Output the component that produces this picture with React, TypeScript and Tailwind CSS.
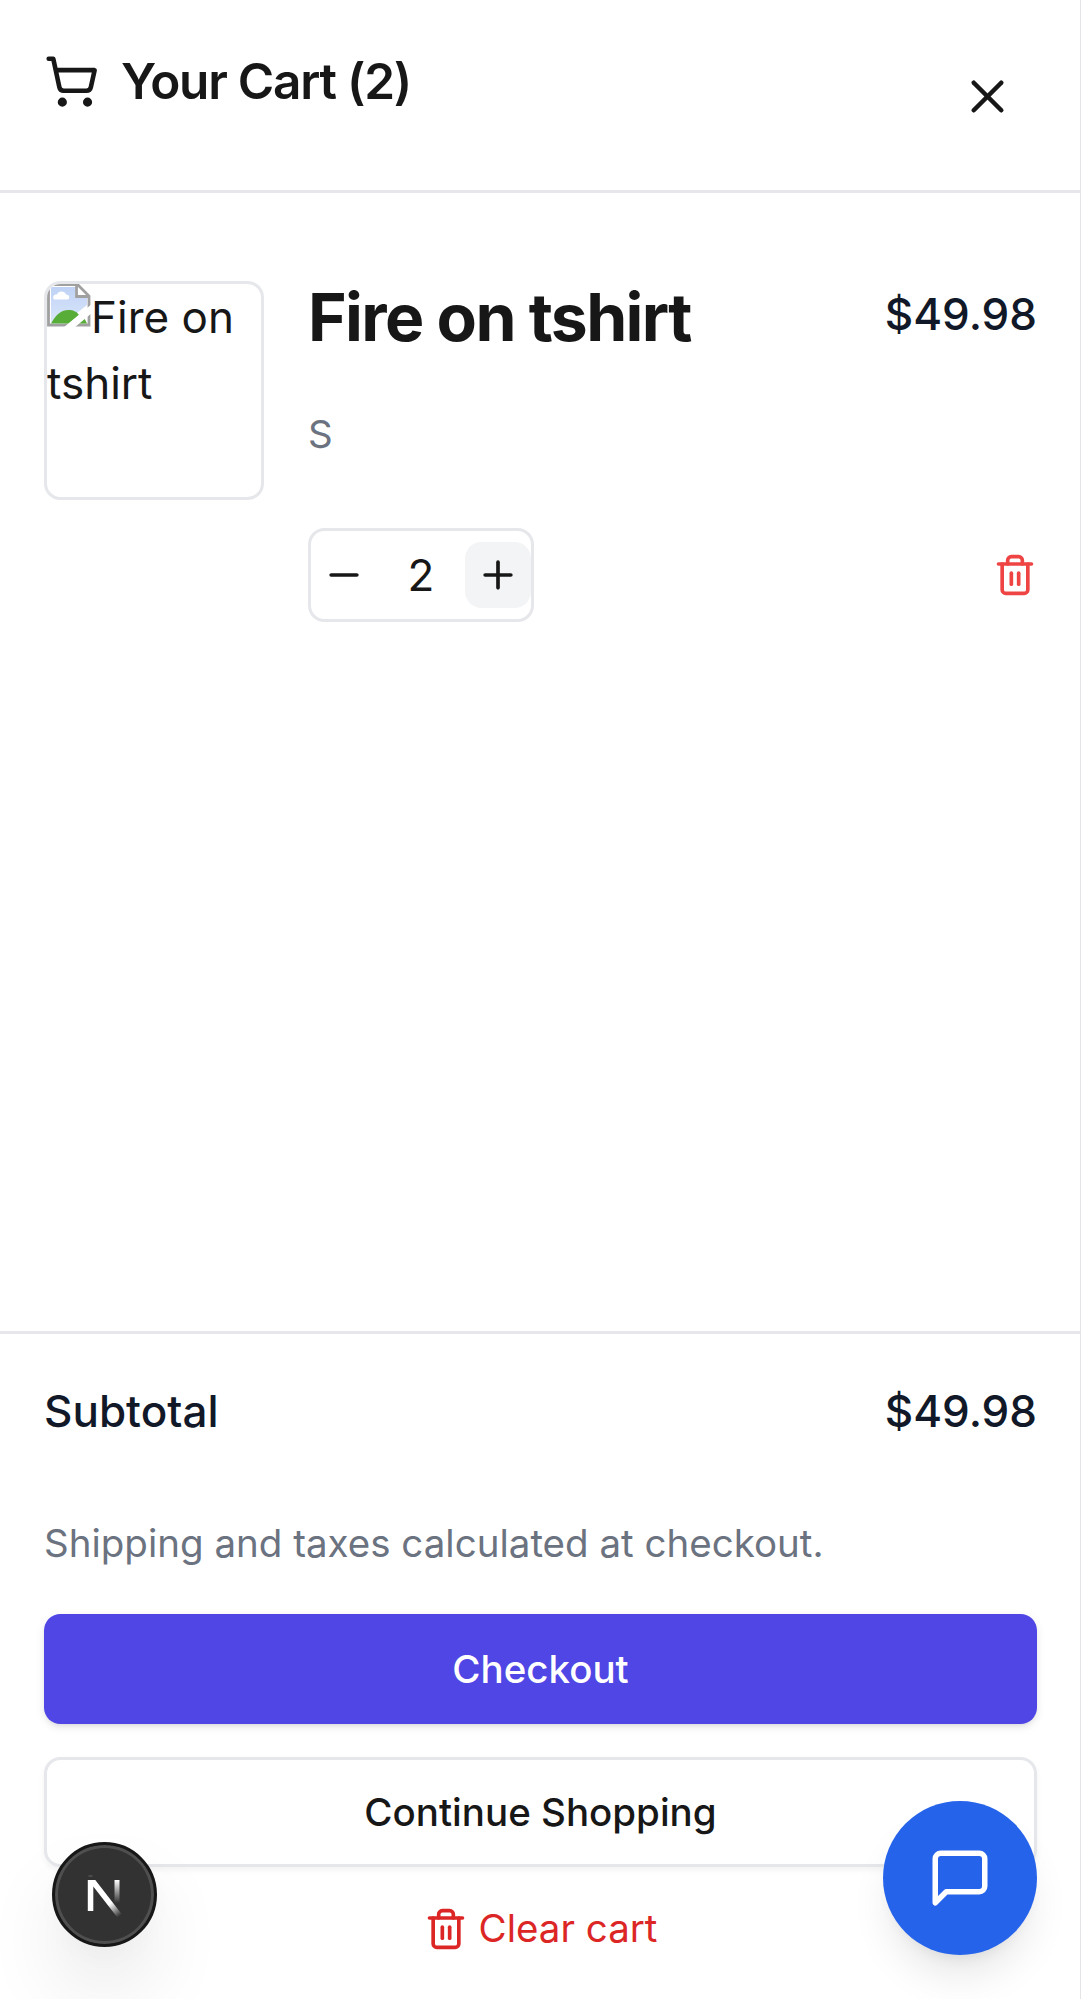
import { Minus, Plus, ShoppingCart, Trash2, X } from "lucide-react";

function BrokenImageIcon() {
  return (
    <svg className="-mt-[8px] inline-block h-[44px] w-[44px] align-[6px]" viewBox="0 0 44 44" fill="none">
      <defs>
        <linearGradient id="sky" x1="0" y1="0" x2="0" y2="1">
          <stop offset="0" stopColor="#bfd2f5" />
          <stop offset="1" stopColor="#dbe7fb" />
        </linearGradient>
      </defs>
      <path d="M1.5 1.5H30.5L42 13V42H1.5Z" fill="#fff" stroke="#a0a0a0" strokeWidth="2.8" />
      <path d="M4 4H28V14.5H40V22L17 40.5H4Z" fill="url(#sky)" />
      <path d="M7 16.5c-2-3 0-5 3-5 1-4 8-4 9 0 4 0 4 4 2 5Z" fill="#fff" />
      <path d="M4 40.5C9 31 15 27 21 27s9 2 11 5L22 40.5Z" fill="#58ad38" />
      <path d="M29 40.5l8-6 3 6Z" fill="#58ad38" />
      <path d="M29.5 2V13.5H42" stroke="#a0a0a0" strokeWidth="2.8" />
      <path d="M16 45L46 20V29L27 45Z" fill="#fff" />
    </svg>
  );
}

function NextBadge() {
  return (
    <div className="absolute top-[1842px] left-[52px] flex h-[105px] w-[105px] items-center justify-center rounded-full border-[3px] border-[#171717] bg-[#323232] shadow-[inset_0_0_0_3px_#4f4f4f,0_44px_88px_-22px_rgba(0,0,0,0.24),0_10px_22px_rgba(0,0,0,0.02)]">
      <svg className="mt-[2px] h-[44px] w-[38px]" viewBox="0 0 38 44" fill="none">
        <defs>
          <linearGradient id="diag" x1="20" y1="22" x2="35" y2="41" gradientUnits="userSpaceOnUse">
            <stop offset="0.35" stopColor="#fff" />
            <stop offset="1" stopColor="#fff" stopOpacity="0" />
          </linearGradient>
          <linearGradient id="stem" x1="0" y1="6" x2="0" y2="29" gradientUnits="userSpaceOnUse">
            <stop offset="0" stopColor="#fff" />
            <stop offset="1" stopColor="#fff" stopOpacity="0" />
          </linearGradient>
        </defs>
        <path d="M2.5 2H6.5" stroke="#656565" strokeWidth="1" />
        <path d="M28.5 6H33.5V29H28.5Z" fill="url(#stem)" />
        <path d="M1.8 6H9.3L36 40.5L31.8 44L7.3 12.5V37H1.8Z" fill="url(#diag)" />
      </svg>
    </div>
  );
}

export default function App() {
  return (
    <div className="relative flex h-[1999px] w-[1081px] flex-col overflow-hidden border-r border-[#e5e5e7] bg-white font-[Inter,sans-serif] text-[44px] leading-[66px] text-[#171717]">
      <header className="flex h-[193px] shrink-0 items-start justify-between border-b-[3px] border-[#e7e7eb] pr-[65px] pl-[44px]">
        <h2 className="mt-[54px] flex items-center gap-[22px] text-[49.5px] leading-[55px] font-semibold tracking-[-0.025em]">
          <ShoppingCart size={55} />
          Your Cart (2)
        </h2>
        <button className="mt-[69px]" aria-label="Close">
          <X size={55} />
        </button>
      </header>

      <main className="flex flex-1 items-start gap-[44px] pt-[88px] pr-[43px] pl-[44px]">
        <div className="h-[219px] w-[220px] shrink-0 overflow-hidden rounded-[16.5px] border-[3px] border-[#e6e7eb]">
          <BrokenImageIcon />
          Fire on tshirt
        </div>
        <div className="flex flex-1 flex-col">
          <div className="flex items-start justify-between">
            <h3 className="text-[66px] leading-[72px] font-bold tracking-[-0.025em]">Fire on tshirt</h3>
            <span className="font-medium text-[#111827]">$49.98</span>
          </div>
          <p className="mt-[54px] text-[38.5px] leading-[55px] text-[#6b7280]">S</p>
          <div className="mt-[66px] flex items-center justify-between">
            <div className="flex h-[94px] items-center rounded-[16.5px] border-[3px] border-[#e6e7eb]">
              <button className="flex size-[66px] items-center justify-center" aria-label="Decrease">
                <Minus size={44} />
              </button>
              <span className="w-[88px] text-center">2</span>
              <button className="flex size-[66px] items-center justify-center rounded-[16.5px] bg-[#f3f4f6]" aria-label="Increase">
                <Plus size={44} />
              </button>
            </div>
            <button className="text-[#ef4444]" aria-label="Remove">
              <Trash2 size={44} />
            </button>
          </div>
        </div>
      </main>

      <footer className="flex h-[668px] shrink-0 flex-col border-t-[3px] border-[#e7e7eb] pt-[44px] pr-[43px] pl-[44px]">
        <div className="flex justify-between font-medium text-[#111827]">
          <span>Subtotal</span>
          <span>$49.98</span>
        </div>
        <p className="mt-[72px] text-[38.5px] leading-[55px] text-[#6b7280]">Shipping and taxes calculated at checkout.</p>
        <button className="mt-[43px] h-[110px] shrink-0 rounded-[16.5px] bg-[#4f46e5] text-[38.5px] font-medium text-white shadow-[0_3px_8px_rgba(0,0,0,0.1),0_3px_5px_-3px_rgba(0,0,0,0.1)]">
          Checkout
        </button>
        <button className="mt-[33px] h-[110px] shrink-0 rounded-[16.5px] border-[3px] border-[#e6e7eb] text-[38.5px] font-medium shadow-[0_3px_6px_rgba(0,0,0,0.05)]">
          Continue Shopping
        </button>
        <button className="mt-[34px] flex items-center justify-center gap-[11px] text-[38.5px] leading-[55px] text-[#dc2626]">
          <Trash2 size={44} />
          Clear cart
        </button>
      </footer>

      <NextBadge />
      <button
        className="absolute top-[1801px] left-[883px] flex size-[154px] items-center justify-center rounded-full bg-[#2563eb] text-white shadow-[0_27px_41px_-8px_rgba(0,0,0,0.1),0_11px_16px_-11px_rgba(0,0,0,0.1)]"
        aria-label="Open chat"
      >
        <svg className="size-[66px]" viewBox="0 0 24 24" fill="none" stroke="currentColor" strokeWidth="2" strokeLinecap="round" strokeLinejoin="round">
          <path d="M21 15a2 2 0 0 1-2 2H7l-4 4V5a2 2 0 0 1 2-2h14a2 2 0 0 1 2 2z" />
        </svg>
      </button>
    </div>
  );
}
